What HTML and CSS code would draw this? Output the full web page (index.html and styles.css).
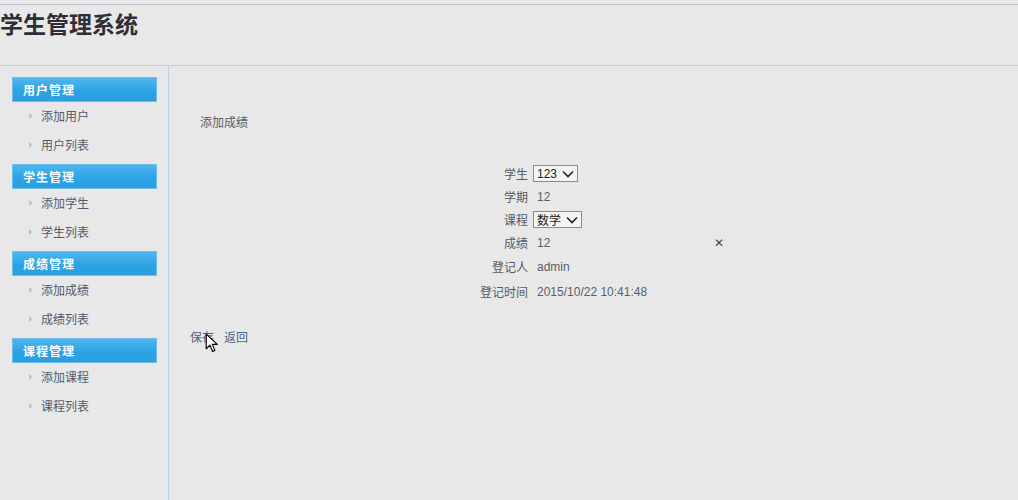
FILE: index.html
```html
<!DOCTYPE html>
<html>
<head>
<meta charset="utf-8">
<link rel="stylesheet" href="styles.css">
</head>
<body>
<div class="top">
  <h1 class="title">学生管理系统</h1>
</div>
<div class="main">
  <aside class="side">
    <div class="group">
      <div class="ghead">用户管理</div>
      <a class="item"><span class="tri"></span>添加用户</a>
      <a class="item"><span class="tri"></span>用户列表</a>
    </div>
    <div class="group">
      <div class="ghead">学生管理</div>
      <a class="item"><span class="tri"></span>添加学生</a>
      <a class="item"><span class="tri"></span>学生列表</a>
    </div>
    <div class="group">
      <div class="ghead">成绩管理</div>
      <a class="item"><span class="tri"></span>添加成绩</a>
      <a class="item"><span class="tri"></span>成绩列表</a>
    </div>
    <div class="group">
      <div class="ghead">课程管理</div>
      <a class="item"><span class="tri"></span>添加课程</a>
      <a class="item"><span class="tri"></span>课程列表</a>
    </div>
  </aside>
  <section class="content">
    <div class="ptitle">添加成绩</div>
    <div class="form">
      <div class="row"><span class="lab">学生</span><span class="val"><span class="sel">123<svg class="chev" viewBox="0 0 12 8" width="12" height="8"><path d="M1 1.5 L6 6.5 L11 1.5" fill="none" stroke="#222" stroke-width="1.6"/></svg></span></span></div>
      <div class="row"><span class="lab">学期</span><span class="val plain">12</span></div>
      <div class="row"><span class="lab">课程</span><span class="val"><span class="sel">数学<svg class="chev" viewBox="0 0 12 8" width="12" height="8"><path d="M1 1.5 L6 6.5 L11 1.5" fill="none" stroke="#222" stroke-width="1.6"/></svg></span></span></div>
      <div class="row"><span class="lab">成绩</span><span class="val plain input">12<span class="clear">✕</span></span></div>
      <div class="row tall"><span class="lab">登记人</span><span class="val plain">admin</span></div>
      <div class="row tall"><span class="lab">登记时间</span><span class="val plain">2015/10/22 10:41:48</span></div>
    </div>
    <div class="actions">
      <a class="btn">保存</a>
      <a class="btn">返回</a>
      <svg class="cursor" viewBox="0 0 12 19" width="13" height="20"><path d="M1 1 L1 15 L4.5 11.5 L7 17.5 L9.2 16.5 L6.8 10.8 L11.5 10.8 Z" fill="#fff" stroke="#000" stroke-width="1.1" stroke-linejoin="round"/></svg>
    </div>
  </section>
</div>
</body>
</html>
```

FILE: styles.css
```css
html, body {
  margin: 0;
  padding: 0;
  background: #e8e8e8;
  font-family: "Liberation Sans", "Noto Sans CJK SC", sans-serif;
  color: #444;
}
.top {
  margin-top: 4px;
  border-top: 1px solid #c6c2d6;
  border-bottom: 1px solid #b9d3e3;
  height: 60px;
  box-sizing: content-box;
}
.title {
  margin: 0;
  padding-top: 3px;
  font-family: "Noto Sans CJK SC", sans-serif;
  font-size: 23px;
  line-height: 30px;
  font-weight: 700;
  color: #2e2e36;
  letter-spacing: 0;
}
.main {
  display: flex;
  min-height: 434px;
}
.side {
  width: 169px;
  flex: none;
  border-right: 1px solid #bcd2e2;
  padding: 11px 0 0 12px;
  box-sizing: border-box;
}
.group {
  height: 87px;
}
.ghead {
  width: 145px;
  height: 25px;
  box-sizing: border-box;
  border: 1px solid #6fbde8;
  background: linear-gradient(#4fb6ee, #2aa2e4 60%, #2d9fdc);
  color: #fff;
  font-family: "Noto Sans CJK SC", sans-serif;
  font-weight: 700;
  font-size: 12px;
  line-height: 23px;
  padding-left: 10px;
  letter-spacing: 1px;
}
.item {
  display: flex;
  align-items: center;
  height: 29px;
  padding-left: 17px;
  padding-bottom: 2px;
  box-sizing: border-box;
  font-family: "Noto Sans CJK SC", sans-serif;
  font-size: 12px;
  color: #555a6a;
}
.tri {
  width: 0;
  height: 0;
  border-left: 4px solid #b8c4d4;
  border-top: 3px solid transparent;
  border-bottom: 3px solid transparent;
  margin-right: 8px;
}
.content {
  flex: 1;
  padding-left: 31px;
}
.ptitle {
  margin-top: 48px;
  font-family: "Noto Sans CJK SC", sans-serif;
  font-size: 12px;
  line-height: 16px;
  color: #555a66;
}
.form {
  margin-top: 32px;
  margin-left: 250px;
  width: 300px;
}
.row {
  display: flex;
  align-items: center;
  height: 23px;
  font-size: 12px;
}
.row.tall {
  height: 25px;
}
.lab {
  width: 78px;
  text-align: right;
  font-family: "Noto Sans CJK SC", sans-serif;
  color: #555a66;
  padding-right: 5px;
}
.val {
  color: #5a5e68;
  display: flex;
  align-items: center;
}
.val.plain {
  padding-left: 4px;
}
.sel {
  display: inline-flex;
  align-items: center;
  height: 15px;
  border: 1px solid #8a8a8a;
  background: #f4f4f4;
  padding: 0 3px 0 3px;
  color: #222;
  font-family: "Liberation Sans", "Noto Sans CJK SC", sans-serif;
  gap: 5px;
}
.chev {
  display: block;
}
.input {
  width: 191px;
  justify-content: space-between;
}
.clear {
  color: #444;
  font-size: 12px;
  padding-right: 4px;
}
.actions {
  position: relative;
  margin-top: 24px;
  margin-left: -10px;
  display: flex;
  gap: 10px;
  font-family: "Noto Sans CJK SC", sans-serif;
  font-size: 12px;
}
.btn {
  color: #4d6288;
}
.cursor {
  position: absolute;
  left: 15px;
  top: 5px;
}
```
